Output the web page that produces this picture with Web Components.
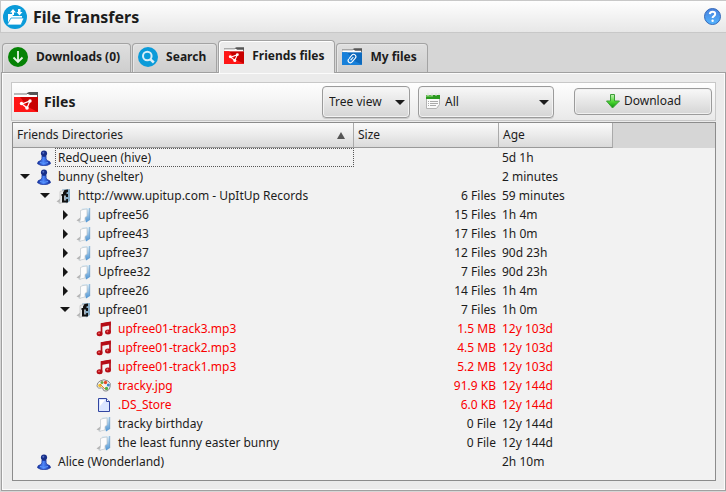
<!DOCTYPE html>
<html lang="en">
<head>
<meta charset="utf-8">
<title>File Transfers</title>
<style>
html,body{margin:0;background:#d6d6d6;color:#1c1c1c;font:12px/18px "Noto Sans","Open Sans",sans-serif}
</style>
</head>
<body>
<file-transfers></file-transfers>
<script>
const define = (name, html, setup) => {
  const t = document.createElement('template');
  t.innerHTML = '<style>*{box-sizing:border-box}</style>' + html;
  customElements.define(name, class extends HTMLElement {
    constructor() {
      super();
      this.attachShadow({mode: 'open'}).append(t.content.cloneNode(true));
    }
    connectedCallback() { if (setup) setup.call(this, this.shadowRoot); }
  });
};

const folder = (a, b, mark) => `<svg viewBox="0 0 24 20"><path d="M13 1l2-1h9v5H12z" fill="#555"/><path d="M1 2h13l2 1h7v4H1z" fill="#fff"/><path d="M0 2h13" stroke="#777"/><path d="M0 5h24v15H0z" fill="${b}"/><path d="M0 5h6l12 15H0z" fill="${a}"/><path d="M0 20L12 14 24 20z" fill="${a}"/>${mark}</svg>`;
const ICONS = {
  transfers: `<svg viewBox="0 0 24 24"><circle cx="12" cy="12" r="12" fill="#0b9bd9"/><path d="M5 19V9h4l1 2h9v3" fill="#fff"/><path d="M4 20l4-7h13l-3 7z" fill="#fff" stroke="#0b9bd9" stroke-width=".8"/><path d="M10 4l3 3.500h-2V10H9V7.500H7zM15 4h2.500v3h2L16.500 10.500 13.500 7H15z" fill="#fff"/></svg>`,
  down: `<svg viewBox="0 0 20 20"><circle cx="10" cy="10" r="10" fill="#058205"/><path d="M10 4v11M5.500 10.500L10 15l4.500-4.500" fill="none" stroke="#e8f4e8" stroke-width="1.800"/></svg>`,
  search: `<svg viewBox="0 0 20 20"><circle cx="10" cy="10" r="10" fill="#0b9bd9"/><circle cx="9.300" cy="9" r="4.300" fill="none" stroke="#d9eef8" stroke-width="2"/><path d="M12.500 12.300l3.300 3.200" stroke="#d9eef8" stroke-width="2.500"/></svg>`,
  share: folder('#ff1616', '#c90000', `<path d="M8 12l8-3-3 7z" fill="none" stroke="#fff" stroke-width="1.300"/><g fill="#fff"><circle cx="7.500" cy="11.500" r="1.700"/><circle cx="16" cy="9" r="1.700"/><circle cx="13" cy="16" r="1.800"/></g>`),
  clip: folder('#1780da', '#0c69bd', `<g transform="rotate(40 12 12.500)" fill="none" stroke="#fff" stroke-width="1.300"><path d="M9.300 15V9.500a2.700 2.700 0 0 1 5.400 0v6a2.700 2.700 0 0 1-5.400 0"/><path d="M12 10v5"/></g>`),
  help: `<svg viewBox="0 0 17 17"><defs><linearGradient id="g" x2="0" y2="1"><stop stop-color="#477fdc"/><stop offset="1" stop-color="#54b5ff"/></linearGradient></defs><circle cx="8.500" cy="8.500" r="8" fill="url(#g)" stroke="#376ab9"/><path d="M5.800 6.200q.3-2.400 2.800-2.400t2.600 2.200q0 1.400-1.600 2.300-1 .6-1 1.700" fill="none" stroke="#fff" stroke-width="2"/><circle cx="8.600" cy="12.700" r="1.200" fill="#fff"/></svg>`,
  calendar: `<svg viewBox="0 0 16 16"><path d="M1.500 2.500h13v9l-3 4h-10z" fill="#fafafa" stroke="#b3b3b3"/><path d="M1 2h14v4H1z" fill="#2b9a20"/><path d="M1 2h7v2H1z" fill="#62bd50"/><path d="M3 0v3M7 0v3M11 0v3M14 0v2" stroke="#ddd"/><path d="M3 8.500h1m1 0h8M3 10.500h1m1 0h8M3 12.500h1m1 0h6" stroke="#aaa"/></svg>`,
  arrow: `<svg viewBox="0 0 16 16"><defs><linearGradient id="g" x2="0" y2="1"><stop stop-color="#c5f0b9"/><stop offset=".5" stop-color="#54dc38"/><stop offset="1" stop-color="#069106"/></linearGradient></defs><path d="M5.500 1.500h4V8h5l-7 7-6-7h4z" fill="url(#g)" stroke="#3c9e37"/></svg>`,
  person: `<svg viewBox="0 0 16 16"><defs><linearGradient id="g"><stop stop-color="#16329d"/><stop offset=".45" stop-color="#4c85fa"/><stop offset="1" stop-color="#102b9b"/></linearGradient></defs><path d="M6 6h4q-.2 3 1 4.500 3.500.5 3.500 3.200Q12 15.700 8 15.700T1.500 13.700q0-2.700 3.500-3.200Q6.200 9 6 6z" fill="url(#g)" stroke="#14309b" stroke-width=".7"/><circle cx="8" cy="3.600" r="3.100" fill="#182f88"/><circle cx="7.300" cy="2.800" r="1" fill="#5671c8"/><path d="M4 12.500q4 1.800 8 0" stroke="#5b99ff" fill="none"/></svg>`,
  folder: `<svg viewBox="0 0 16 16"><defs><linearGradient id="g" x2="0" y2="1"><stop stop-color="#d6ebf8"/><stop offset="1" stop-color="#4d93d2"/></linearGradient></defs><path d="M.5 13.500L5 10v5.500z" fill="#b5b5b5"/><path d="M6 1.500L14 1v12l-4 2.500z" fill="url(#g)"/><path d="M13.700 1v12" stroke="#6d9cc6" stroke-width=".7"/><path d="M4.500 3.500L7 2.500 11 2v7l-2 1.500V14l-6 1.300q1.500-2 1.500-4z" fill="#fcfcfc" stroke="#bcc4ca" stroke-width=".7"/></svg>`,
  shared: `<svg viewBox="0 0 16 16"><path d="M.5 13.500L5 10v5.500z" fill="#b5b5b5"/><path d="M6 1.500L14 1v12l-4 2.500z" fill="#86acc7"/><path d="M4 3.500L9 2v12l-6 1.300q1-2 1-4z" fill="#e7eaeb" stroke="#aaa" stroke-width=".5"/><path d="M5.500 6H7V4.500L8.500 2 12 1.500V4l-1.500.5V6H12v3h-2V7.500H8.200v5h2V11H12v3.500H6V8h-.5z" fill="#111"/></svg>`,
  music: `<svg viewBox="0 0 16 16"><path d="M5.500 12.500V3l8.500-1.500v9.500" fill="none" stroke="#b50d16" stroke-width="1.700"/><path d="M5 2.500L14.700.8v3.400L5 6z" fill="#b50d16"/><ellipse cx="3.600" cy="12.800" rx="3" ry="2.500" fill="#b50d16"/><ellipse cx="12" cy="11" rx="3" ry="2.500" fill="#b50d16"/><circle cx="3" cy="12.300" r=".9" fill="#e66"/><circle cx="11.400" cy="10.500" r=".9" fill="#e66"/></svg>`,
  image: `<svg viewBox="0 0 16 16"><path d="M4 3q4-2.500 8 0 3.500 2 2 6-1 4.500-5 4-2-.2-2-2 0-1.500-1.500-1.200-4 1.200-4.500-2Q1 4.500 4 3z" fill="#f3f3f3" stroke="#888"/><circle cx="4" cy="7.500" r="1.800" fill="#f4be28"/><circle cx="6" cy="4.500" r="1.500" fill="#69a845"/><circle cx="9.500" cy="4.500" r="1.700" fill="#e34c28"/><circle cx="12.300" cy="7" r="1.500" fill="#3d87cf"/><circle cx="10.500" cy="10.500" r="1.700" fill="#54ae42"/><path d="M4 6l5 5" stroke="#e98a20"/></svg>`,
  file: `<svg viewBox="0 0 16 16"><path d="M2.500 1.500h8l3 3v10h-11z" fill="#dbe6ff" stroke="#3145a1"/><path d="M4 3h5L4 9z" fill="#fff"/><path d="M10.500 1.500v3h3" fill="#fff" stroke="#3145a1"/></svg>`
};

define('ui-icon', `<style>:host{display:block;flex:none;width:16px;height:16px}span{display:contents}svg{display:block;width:100%;height:100%}</style><span></span>`,
  function (r) { r.querySelector('span').innerHTML = ICONS[this.getAttribute('name')] || ''; });

define('title-bar', `<style>
:host{display:flex;align-items:center;gap:6px;height:33px;padding:0 5px 0 2px;background:linear-gradient(#fefefe,#e7e7e7);border:solid #c8c8c8;border-width:1px 0 1px 1px}
h1{flex:1;margin:0;font-size:16px;line-height:24px;font-weight:700}
.app{width:24px;height:24px}
button{border:0;padding:0;background:none}
.help{width:17px;height:17px}
</style><ui-icon class="app" name="transfers"></ui-icon><h1><slot></slot></h1>
<button aria-label="Help"><ui-icon class="help" name="help"></ui-icon></button>`);

define('tab-button', `<style>
:host{display:block}
button{display:flex;align-items:center;gap:8px;height:29px;padding:0 10px 3px 5px;border:1px solid #a3a3a3;border-bottom:0;border-radius:4px 4px 0 0;background:linear-gradient(#dfdfdf,#cecece);box-shadow:inset 1px 1px #e6e6e6;font:inherit;font-weight:700;color:inherit;white-space:nowrap}
ui-icon{width:20px;height:20px}
:host([wide]) ui-icon{height:17px}
:host([selected]){position:relative;margin-bottom:-1px}
:host([selected]) button{height:33px;background:#ebebeb;box-shadow:inset 1px 1px #fff}
</style><button role="tab"><span></span><slot></slot></button>`,
  function (r) {
    const icon = document.createElement('ui-icon');
    icon.setAttribute('name', this.getAttribute('icon'));
    r.querySelector('span').replaceWith(icon);
    r.querySelector('button').setAttribute('aria-selected', this.hasAttribute('selected'));
  });

define('tool-select', `<style>
:host{display:block;position:relative}
select{appearance:none;display:block;width:100%;height:32px;margin:0;padding:0 20px 0 6px;border:1px solid #9b9b9b;border-radius:4px;background:linear-gradient(#f8f8f8,#d5d5d5);box-shadow:inset 0 0 0 1px #f3f3f3,0 1px #ccc;font:inherit;color:inherit}
:host([icon]) select{padding-left:26px}
.lead{position:absolute;left:7px;top:7px}
.mark{position:absolute;right:5px;top:14px;border:solid transparent;border-width:5px 5px 0;border-top-color:#1c1c1c;pointer-events:none}
</style><select><option></option></select><span class="mark"></span>`,
  function (r) {
    r.querySelector('option').textContent = this.getAttribute('value');
    r.querySelector('select').setAttribute('aria-label', this.getAttribute('label'));
    if (this.hasAttribute('icon')) {
      const i = document.createElement('ui-icon');
      i.className = 'lead';
      i.setAttribute('name', this.getAttribute('icon'));
      r.append(i);
    }
  });

define('files-toolbar', `<style>
:host{display:flex;align-items:center;height:39px;padding:0 3px 0 2px;border:1px solid #c8c8c8;background:linear-gradient(#fefefe,#e9e9e9)}
.ic{width:24px;height:20px}
h2{flex:1;margin:0 0 0 6px;font-size:14px;line-height:20px}
.view{width:88px;margin-right:8px}.type{width:136px;margin-right:20px}
button{display:flex;align-items:center;justify-content:center;gap:3px;width:138px;height:27px;padding:0 0 2px;border:1px solid #9b9b9b;border-radius:4px;background:linear-gradient(#f8f8f8,#d5d5d5);box-shadow:inset 0 0 0 1px #f0f0f0;font:inherit;color:inherit}
</style><ui-icon class="ic" name="share"></ui-icon><h2>Files</h2>
<tool-select class="view" value="Tree view" label="View"></tool-select>
<tool-select class="type" value="All" label="Type" icon="calendar"></tool-select>
<button><ui-icon name="arrow"></ui-icon>Download</button>`);

const ROWS = [
  [0, '', 'person', 'RedQueen (hive)', '', '5d 1h', 'focus'],
  [0, 'open', 'person', 'bunny (shelter)', '', '2 minutes'],
  [1, 'open', 'shared', 'http://www.upitup.com - UpItUp Records', '6 Files', '59 minutes'],
  [2, 'closed', 'folder', 'upfree56', '15 Files', '1h 4m'],
  [2, 'closed', 'folder', 'upfree43', '17 Files', '1h 0m'],
  [2, 'closed', 'folder', 'upfree37', '12 Files', '90d 23h'],
  [2, 'closed', 'folder', 'Upfree32', '7 Files', '90d 23h'],
  [2, 'closed', 'folder', 'upfree26', '14 Files', '1h 4m'],
  [2, 'open', 'shared', 'upfree01', '7 Files', '1h 0m'],
  [3, '', 'music', 'upfree01-track3.mp3', '1.5 MB', '12y 103d', 'red'],
  [3, '', 'music', 'upfree01-track2.mp3', '4.5 MB', '12y 103d', 'red'],
  [3, '', 'music', 'upfree01-track1.mp3', '5.2 MB', '12y 103d', 'red'],
  [3, '', 'image', 'tracky.jpg', '91.9 KB', '12y 144d', 'red'],
  [3, '', 'file', '.DS_Store', '6.0 KB', '12y 144d', 'red'],
  [3, '', 'folder', 'tracky birthday', '0 File', '12y 144d'],
  [3, '', 'folder', 'the least funny easter bunny', '0 File', '12y 144d'],
  [0, '', 'person', 'Alice (Wonderland)', '', '2h 10m']
];

define('file-tree', `<style>
:host{display:block;border:1px solid #8c8c8c;background:#f2f2f2}
table{width:100%;border-collapse:separate;border-spacing:0;table-layout:fixed}
.c1{width:341px}.c2{width:145px}.c3{width:114px}
th{height:25px;padding:0 4px;text-align:left;font-weight:400;background:linear-gradient(#fbfbfb,#dadada);border-right:1px solid #aaa;border-bottom:1px solid #999}
th.rest{background:#d6d6d6;border-right:0;border-bottom-color:#d6d6d6}
.sort{display:flex;justify-content:space-between;align-items:center;padding-right:4px}
.up{border:solid transparent;border-width:0 4px 7px;border-bottom-color:#555}
td{height:19px;padding:0 3px;line-height:18px;white-space:nowrap}
td.name{padding:0 0 0 3px}
td.size{text-align:right}
.cell{display:flex;align-items:center;height:19px;padding-left:calc(var(--level)*20px)}
.tw{flex:none;display:flex;align-items:center;justify-content:center;width:20px;height:19px;padding:0 2px 0 0;border:0;background:none}
.open::after{content:"";border:solid transparent;border-width:5px 5px 0;border-top-color:#161616}
.closed::after{content:"";border:solid transparent;border-width:5px 0 5px 5px;border-left-color:#161616}
.label{flex:1;margin-left:3px;padding:0 2px;border:1px solid transparent;line-height:17px}
.focus .label{border:1px dotted #555}
.red{color:#fa0000}
</style><table><colgroup><col class="c1"><col class="c2"><col class="c3"><col></colgroup>
<thead><tr><th><span class="sort">Friends Directories<span class="up"></span></span></th><th>Size</th><th>Age</th><th class="rest"></th></tr></thead><tbody></tbody></table>`,
  function (r) {
    r.querySelector('tbody').innerHTML = ROWS.map(([level, state, icon, name, size, age, cls = '']) =>
      `<tr class="${cls}"><td class="name"><div class="cell" style="--level:${level}">${state
        ? `<button class="tw ${state}" aria-label="Toggle ${name}"></button>` : '<span class="tw"></span>'
      }<ui-icon name="${icon}"></ui-icon><span class="label">${name}</span></div></td><td class="size">${size}</td><td>${age}</td><td></td></tr>`).join('');
  });

define('file-transfers', `<style>
:host{display:flex;flex-direction:column;min-height:100vh}
nav{display:flex;align-items:flex-end;gap:1px;height:39px;padding-left:2px}
main{flex:1;display:flex;flex-direction:column;margin:0 0 1px 1px;padding:9px;border:1px solid #a0a0a0;background:#ebebeb;box-shadow:inset 0 0 0 1px #fbfbfb}
file-tree{flex:1;margin:1px 0 0 1px}
</style>
<title-bar>File Transfers</title-bar>
<nav role="tablist">
<tab-button icon="down">Downloads (0)</tab-button>
<tab-button icon="search">Search</tab-button>
<tab-button icon="share" wide selected>Friends files</tab-button>
<tab-button icon="clip" wide>My files</tab-button>
</nav>
<main><files-toolbar></files-toolbar><file-tree></file-tree></main>`);
</script>
</body>
</html>
